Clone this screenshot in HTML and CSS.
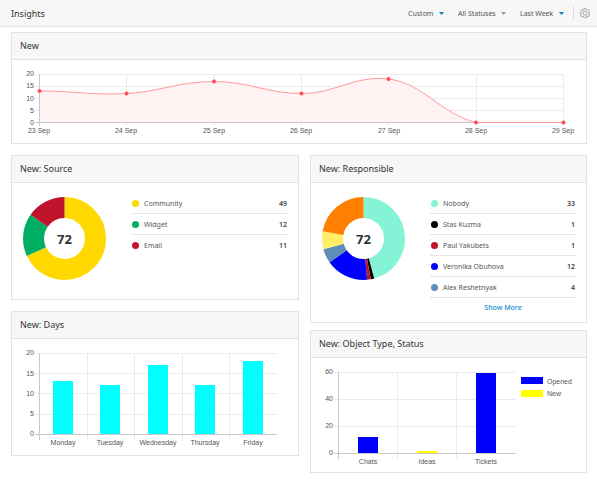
FILE: index.html
```
<!DOCTYPE html>
<html lang="en">
<head>
    <meta charset="UTF-8">
    <meta name="viewport" content="width=device-width, initial-scale=1.0">
    <title>Insights</title>
    <link rel="stylesheet" href="styles.css">
</head>
<body>
    <header class="topbar">
        <h1>Insights</h1>
        <div class="filters">
            <label class="filter">
                <select aria-label="Report"><option>Custom</option></select>
                <svg class="arrow" viewBox="0 0 5 3"><path d="M0 0h5L2.5 3z"/></svg>
            </label>
            <label class="filter muted">
                <select aria-label="Status"><option>All Statuses</option></select>
                <svg class="arrow" viewBox="0 0 5 3"><path d="M0 0h5L2.5 3z"/></svg>
            </label>
            <label class="filter">
                <select aria-label="Period"><option>Last Week</option></select>
                <svg class="arrow" viewBox="0 0 5 3"><path d="M0 0h5L2.5 3z"/></svg>
            </label>
            <button class="settings" aria-label="Settings">
                <svg viewBox="0 0 20 20">
                    <path d="M8.3 1.2h3.4l.6 2.2 1.6.7 2-1.2 2.4 2.4-1.2 2 .7 1.6 1.8.5v2.2l-1.8.5-.7 1.6 1.2 2-2.4 2.4-2-1.2-1.6.7-.6 2.2H8.3l-.6-2.2-1.6-.7-2 1.2-2.4-2.4 1.2-2-.7-1.6-1.8-.5V9.4l1.8-.5.7-1.6-1.2-2 2.4-2.4 2 1.2 1.6-.7z"/>
                    <circle cx="10" cy="10.5" r="4"/>
                </svg>
            </button>
        </div>
    </header>

    <main class="dashboard">
        <section class="card wide">
            <h2>New</h2>
            <svg class="chart" viewBox="0 0 574 83">
                <path class="grid" d="M23 14.5H551M23 26.5H551M23 38.5H551M23 50.5H551"/>
                <path class="grid" d="M114.5 14V66M202.5 14V66M289.5 14V66M376.5 14V66M464.5 14V66M551.5 14V66"/>
                <path class="area" d="M27.5 31C62 31 80 35.4 114.5 33.5S167 21.5 202 21.5 255 33.5 289.5 33.5 342 15 376.5 19 429 54 464 62.5H551.5 27.5z"/>
                <path class="axis" d="M23 62.5H551M27.5 14V66"/>
                <path class="line" d="M27.5 31C62 31 80 35.4 114.5 33.5S167 21.5 202 21.5 255 33.5 289.5 33.5 342 15 376.5 19 429 54 464 62.5H551.5"/>
                <g class="points">
                    <circle cx="27.5" cy="31" r="2"/>
                    <circle cx="114.5" cy="33.5" r="2"/>
                    <circle cx="202" cy="21.5" r="2"/>
                    <circle cx="289.5" cy="33.5" r="2"/>
                    <circle cx="376.5" cy="19" r="2"/>
                    <circle cx="464" cy="62.5" r="2"/>
                    <circle cx="551.5" cy="62.5" r="2"/>
                </g>
                <g class="y-labels">
                    <text x="22" y="16">20</text>
                    <text x="22" y="28">15</text>
                    <text x="22" y="41">10</text>
                    <text x="22" y="53">5</text>
                    <text x="22" y="65">0</text>
                </g>
                <g class="x-labels">
                    <text x="27" y="73">23 Sep</text>
                    <text x="114" y="73">24 Sep</text>
                    <text x="202" y="73">25 Sep</text>
                    <text x="289" y="73">26 Sep</text>
                    <text x="377" y="73">27 Sep</text>
                    <text x="464" y="73">28 Sep</text>
                    <text x="551" y="73">29 Sep</text>
                </g>
            </svg>
        </section>

        <div class="column left">
            <section class="card">
                <h2>New: Source</h2>
                <div class="breakdown">
                    <svg class="donut" viewBox="0 0 83 83">
                        <g transform="rotate(-90 41.5 41.5)">
                            <circle cx="41.5" cy="41.5" r="31" pathLength="72" stroke="#ffd800" stroke-dasharray="49 23"/>
                            <circle cx="41.5" cy="41.5" r="31" pathLength="72" stroke="#00ae63" stroke-dasharray="12 60" stroke-dashoffset="-49"/>
                            <circle cx="41.5" cy="41.5" r="31" pathLength="72" stroke="#c0142d" stroke-dasharray="11 61" stroke-dashoffset="-61"/>
                        </g>
                        <text x="41.5" y="47">72</text>
                    </svg>
                    <ul class="legend">
                        <li><i class="dot yellow"></i>Community <b>49</b></li>
                        <li><i class="dot green"></i>Widget <b>12</b></li>
                        <li><i class="dot red"></i>Email <b>11</b></li>
                    </ul>
                </div>
            </section>

            <section class="card">
                <h2>New: Days</h2>
                <svg class="chart" viewBox="0 0 286 116">
                    <path class="grid" d="M23 14.5H265M23 34.5H265M23 54.5H265M23 75.5H265"/>
                    <path class="grid" d="M75.5 14V101M122.5 14V101M170.5 14V101M217.5 14V101"/>
                    <path class="axis" d="M27.5 14V101"/>
                    <g fill="#0ff">
                        <rect x="41" y="42" width="20" height="53"/>
                        <rect x="88" y="46" width="20" height="49"/>
                        <rect x="136" y="26" width="20" height="69"/>
                        <rect x="183" y="46" width="20" height="49"/>
                        <rect x="231" y="22" width="20" height="73"/>
                    </g>
                    <path class="axis" d="M23 95.5H265"/>
                    <g class="y-labels">
                        <text x="22" y="16">20</text>
                        <text x="22" y="37">15</text>
                        <text x="22" y="57">10</text>
                        <text x="22" y="77">5</text>
                        <text x="22" y="97">0</text>
                    </g>
                    <g class="x-labels">
                        <text x="51" y="106">Monday</text>
                        <text x="98" y="106">Tuesday</text>
                        <text x="146" y="106">Wednesday</text>
                        <text x="193" y="106">Thursday</text>
                        <text x="241" y="106">Friday</text>
                    </g>
                </svg>
            </section>
        </div>

        <div class="column right">
            <section class="card">
                <h2>New: Responsible</h2>
                <div class="breakdown">
                    <svg class="donut" viewBox="0 0 83 83">
                        <g transform="rotate(-90 41.5 41.5)">
                            <circle cx="41.5" cy="41.5" r="31" pathLength="72" stroke="#84f3d6" stroke-dasharray="33 39"/>
                            <circle cx="41.5" cy="41.5" r="31" pathLength="72" stroke="#000" stroke-dasharray="1 71" stroke-dashoffset="-33"/>
                            <circle cx="41.5" cy="41.5" r="31" pathLength="72" stroke="#c0142d" stroke-dasharray="1 71" stroke-dashoffset="-34"/>
                            <circle cx="41.5" cy="41.5" r="31" pathLength="72" stroke="#00f" stroke-dasharray="12 60" stroke-dashoffset="-35"/>
                            <circle cx="41.5" cy="41.5" r="31" pathLength="72" stroke="#5f8fb8" stroke-dasharray="4 68" stroke-dashoffset="-47"/>
                            <circle cx="41.5" cy="41.5" r="31" pathLength="72" stroke="#ffee66" stroke-dasharray="5 67" stroke-dashoffset="-51"/>
                            <circle cx="41.5" cy="41.5" r="31" pathLength="72" stroke="#ff7f00" stroke-dasharray="16 56" stroke-dashoffset="-56"/>
                        </g>
                        <text x="41.5" y="47">72</text>
                    </svg>
                    <div class="legend-wrap">
                        <ul class="legend">
                            <li><i class="dot mint"></i>Nobody <b>33</b></li>
                            <li><i class="dot black"></i>Stas Kuzma <b>1</b></li>
                            <li><i class="dot red"></i>Paul Yakubets <b>1</b></li>
                            <li><i class="dot blue"></i>Veronika Obuhova <b>12</b></li>
                            <li><i class="dot steel"></i>Alex Reshetnyak <b>4</b></li>
                        </ul>
                        <a class="more" href="#">Show More</a>
                    </div>
                </div>
            </section>

            <section class="card">
                <h2>New: Object Type, Status</h2>
                <svg class="chart" viewBox="0 0 275 114">
                    <path class="grid" d="M23 14.5H205M23 41.5H205M23 68.5H205"/>
                    <path class="grid" d="M86.5 14V101M145.5 14V101"/>
                    <path class="axis" d="M27.5 14V101"/>
                    <path class="axis" d="M23 95.5H205"/>
                    <rect x="47" y="79" width="20" height="16" fill="#00f"/>
                    <rect x="106" y="93" width="20" height="2" fill="#ff0"/>
                    <rect x="165" y="15" width="20" height="80" fill="#00f"/>
                    <g class="y-labels">
                        <text x="22" y="16">60</text>
                        <text x="22" y="43">40</text>
                        <text x="22" y="70">20</text>
                        <text x="22" y="97">0</text>
                    </g>
                    <g class="x-labels">
                        <text x="57" y="106">Chats</text>
                        <text x="116" y="106">Ideas</text>
                        <text x="175" y="106">Tickets</text>
                    </g>
                    <rect x="210" y="19" width="22" height="7" fill="#00f"/>
                    <rect x="210" y="32" width="22" height="7" fill="#ff0"/>
                    <text x="236" y="26">Opened</text>
                    <text x="236" y="38">New</text>
                </svg>
            </section>
        </div>
    </main>
</body>
</html>
```
FILE: styles.css
```
* {
    box-sizing: border-box;
}
body {
    margin: 0;
    font-family: "Noto Sans", "Open Sans", sans-serif;
    font-size: 7px;
    color: #555;
    background-color: #fff;
}
.topbar {
    display: flex;
    justify-content: space-between;
    align-items: center;
    height: 27px;
    padding: 0 7px 0 11px;
    background-color: #f7f7f7;
    border-bottom: 1px solid #e4e4e4;
}
h1, h2 {
    margin: 0;
    font-size: 9px;
    font-weight: normal;
    color: #333;
}
.filters {
    display: flex;
    align-items: center;
}
.filter {
    display: flex;
    align-items: center;
    gap: 5px;
    margin-right: 14px;
}
.filter:nth-child(3) {
    margin-right: 9px;
}
.filter select {
    appearance: none;
    border: none;
    padding: 0;
    background: none;
    font: inherit;
    color: #555;
}
.arrow {
    width: 5px;
    height: 3px;
    fill: #0a7cc4;
}
.muted .arrow {
    fill: #999;
}
.settings {
    display: flex;
    align-items: center;
    height: 14px;
    padding: 0 0 0 6px;
    background: none;
    border: none;
    border-left: 1px solid #ddd;
}
.settings svg {
    width: 10px;
    height: 10px;
    fill: none;
    stroke: #888;
    stroke-width: 1.5;
}
.dashboard {
    display: grid;
    grid-template-columns: 288fr 277fr;
    gap: 11px;
    padding: 5px 10px 7px 11px;
}
.wide {
    grid-column: span 2;
}
.column {
    display: flex;
    flex-direction: column;
    gap: 11px;
}
.right {
    gap: 7px;
}
.card {
    background-color: #fff;
    border: 1px solid #e2e2e2;
}
.card h2 {
    height: 27px;
    padding-left: 8px;
    line-height: 26px;
    background-color: #f7f7f7;
    border-bottom: 1px solid #e2e2e2;
}
.chart {
    display: block;
    width: 100%;
    font-family: "Liberation Sans", Arial, sans-serif;
    font-size: 7px;
    fill: #555;
}
.grid {
    fill: none;
    stroke: #ebebeb;
}
.axis {
    fill: none;
    stroke: #c8c8c8;
}
.area {
    fill: #fff2f2;
}
.line {
    fill: none;
    stroke: #ff9a9a;
}
.points {
    fill: #ff4d55;
}
.y-labels {
    text-anchor: end;
}
.x-labels {
    text-anchor: middle;
}
.breakdown {
    display: flex;
    align-items: flex-start;
    gap: 26px;
    padding: 10px 11px 8px 11px;
}
.donut {
    flex: none;
    width: 83px;
    height: 83px;
    margin: 4px 0 11px;
}
.donut circle {
    fill: none;
    stroke-width: 21;
}
.donut text {
    font-size: 13px;
    font-weight: bold;
    text-anchor: middle;
    fill: #333;
}
.legend, .legend-wrap {
    flex: 1;
}
.legend {
    list-style: none;
    margin: 0;
    padding: 0;
}
.legend li {
    display: flex;
    align-items: center;
    height: 21px;
    border-bottom: 1px dotted #ccc;
}
.left .legend li:last-child {
    border-bottom-color: transparent;
}
.legend b {
    margin-left: auto;
    font-weight: 600;
    color: #444;
}
.dot {
    width: 7px;
    height: 7px;
    margin-right: 5px;
    border-radius: 50%;
}
.yellow { background-color: #ffd800; }
.green { background-color: #00ae63; }
.red { background-color: #c0142d; }
.mint { background-color: #84f3d6; }
.black { background-color: #000; }
.blue { background-color: #00f; }
.steel { background-color: #5f8fb8; }
.more {
    display: block;
    padding-top: 4px;
    line-height: 12px;
    text-align: center;
    font-weight: 500;
    color: #0a8ccc;
    text-decoration: none;
}
```
